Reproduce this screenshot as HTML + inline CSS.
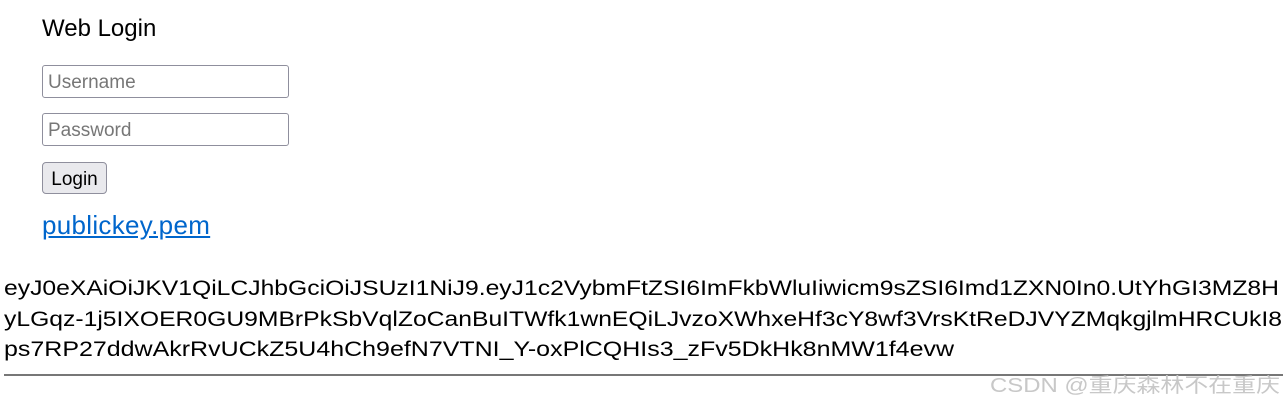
<!DOCTYPE html>
<html><head><style>
body{margin:0;width:1283px;height:408px;background:#fff;font-family:"Liberation Sans",sans-serif;position:relative;overflow:hidden}
.a{position:absolute}
.in{position:absolute;left:42px;height:31px;border:1px solid #8f8f9d;border-radius:3px;box-sizing:content-box;color:#777;font-size:19px;line-height:33px;padding-left:5px;width:240px}
</style></head><body>
<div class="a" style="left:42px;top:15px;font-size:24px;color:#000">Web Login</div>
<div class="in" style="top:65px">Username</div>
<div class="in" style="top:113px">Password</div>
<div class="a" style="left:42px;top:162px;width:63px;height:30px;border:1px solid #8f8f9d;border-radius:4px;background:#e9e9ed;font-size:19px;line-height:33px;text-align:center">Login</div>
<div class="a" style="left:42px;top:210px;font-size:26px;color:#0066cc;text-decoration:underline;letter-spacing:0.3px">publickey.pem</div>
<svg class="a" style="left:0;top:270px" width="1283" height="138">
<g font-family="Liberation Sans, sans-serif" font-size="21" fill="#000">
<text x="4" y="25" textLength="1275" lengthAdjust="spacingAndGlyphs">eyJ0eXAiOiJKV1QiLCJhbGciOiJSUzI1NiJ9.eyJ1c2VybmFtZSI6ImFkbWluIiwicm9sZSI6Imd1ZXN0In0.UtYhGI3MZ8H</text>
<text x="4" y="56" textLength="1278" lengthAdjust="spacingAndGlyphs">yLGqz-1j5IXOER0GU9MBrPkSbVqlZoCanBuITWfk1wnEQiLJvzoXWhxeHf3cY8wf3VrsKtReDJVYZMqkgjlmHRCUkI8</text>
<text x="4" y="86" textLength="950" lengthAdjust="spacingAndGlyphs">ps7RP27ddwAkrRvUCkZ5U4hCh9efN7VTNI_Y-oxPlCQHIs3_zFv5DkHk8nMW1f4evw</text>
</g>
<rect x="4" y="104" width="1279" height="2" fill="#777"/>
<text x="990" y="122" font-family="Liberation Sans, Noto Sans CJK SC, sans-serif" font-size="20" fill="#c8c8c8" textLength="290" lengthAdjust="spacingAndGlyphs">CSDN @重庆森林不在重庆</text>
</svg>
</body></html>
